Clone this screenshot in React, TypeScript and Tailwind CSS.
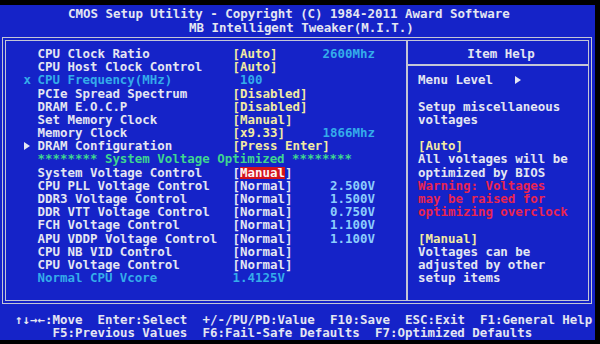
import type { ReactNode } from "react";

const WHITE = "text-[#e4e6f2]";
const YELLOW = "text-[#f2eaa2]";
const CYAN = "text-[#34acea]";
const SKY = "text-[#8ccdfc]";
const GREEN = "text-[#3fd690]";
const RED = "text-[#ea2450]";

function Tri() {
  return (
    <svg width="6" height="8" viewBox="0 0 6 8" className="inline-block">
      <path d="M0 0 L6 4 L0 8 Z" fill="currentColor" />
    </svg>
  );
}

type RowProps = {
  mark?: ReactNode;
  label: string;
  labelCls?: string;
  value?: ReactNode;
  extra?: string;
  extraCls?: string;
};

function Row({ mark, label, labelCls = WHITE, value, extra, extraCls = CYAN }: RowProps) {
  return (
    <div className="flex h-[13.2px] items-center whitespace-pre pl-[16.5px] leading-[13.2px]">
      <span className={`flex w-[15px] items-center pl-[1px] ${labelCls}`}>{mark}</span>
      <span className={`w-[195px] ${labelCls}`}>{label}</span>
      <span className="w-[90px]">{value}</span>
      <span className={extraCls}>{extra}</span>
    </div>
  );
}

function Val({ text, cls = YELLOW }: { text: string; cls?: string }) {
  return <span className={cls}>{text}</span>;
}

function HelpLine({ children, cls = WHITE }: { children?: ReactNode; cls?: string }) {
  return <div className={`flex h-[13.2px] items-center whitespace-pre leading-[13.2px] ${cls}`}>{children}</div>;
}

export default function App() {
  return (
    <div className="h-[344px] w-[600px] overflow-hidden bg-black pt-[5px] font-['DejaVu_Sans_Mono',monospace] text-[12.45px] font-bold">
      <div className="h-[335px] w-[595px] bg-[#1523c8] pt-[2.4px]">
        {/* title */}
        <div className={`h-[13.2px] whitespace-pre pl-[68px] leading-[13.2px] ${WHITE}`}>
          CMOS Setup Utility - Copyright (C) 1984-2011 Award Software
        </div>
        <div className={`h-[13.2px] whitespace-pre pl-[189px] leading-[13.2px] ${WHITE}`}>
          MB Intelligent Tweaker(M.I.T.)
        </div>

        {/* frame */}
        <div className="mt-[3.7px] ml-[2px] flex h-[267px] w-[590px] border-[4px] border-double border-[#c4c6d6]">
          <div className="w-[400px] pt-[5.5px]">
            <Row label="CPU Clock Ratio" value={<Val text="[Auto]" />} extra="2600Mhz" />
            <Row label="CPU Host Clock Control" value={<Val text="[Auto]" />} />
            <Row
              mark="x"
              label="CPU Frequency(MHz)"
              labelCls={CYAN}
              value={<Val text=" 100" cls={CYAN} />}
            />
            <Row label="PCIe Spread Spectrum" value={<Val text="[Disabled]" />} />
            <Row label="DRAM E.O.C.P" value={<Val text="[Disabled]" />} />
            <Row label="Set Memory Clock" value={<Val text="[Manual]" />} />
            <Row label="Memory Clock" value={<Val text="[x9.33]" />} extra="1866Mhz" />
            <Row mark={<Tri />} label="DRAM Configuration" value={<Val text="[Press Enter]" />} />
            <div className={`flex h-[13.2px] items-center whitespace-pre pl-[31.5px] leading-[13.2px] ${GREEN}`}>
              ******** System Voltage Optimized ********
            </div>
            <Row
              label="System Voltage Control"
              value={
                <span className={WHITE}>
                  [
                  <span className="inline-block h-[12px] bg-[#d3121e] leading-[12px] text-[#fff4f4]">Manual</span>]
                </span>
              }
            />
            <Row label="CPU PLL Voltage Control" value={<Val text="[Normal]" cls={WHITE} />} extra=" 2.500V" extraCls={SKY} />
            <Row label="DDR3 Voltage Control" value={<Val text="[Normal]" cls={WHITE} />} extra=" 1.500V" extraCls={SKY} />
            <Row label="DDR VTT Voltage Control" value={<Val text="[Normal]" cls={WHITE} />} extra=" 0.750V" extraCls={SKY} />
            <Row label="FCH Voltage Control" value={<Val text="[Normal]" cls={WHITE} />} extra=" 1.100V" extraCls={SKY} />
            <Row label="APU VDDP Voltage Control" value={<Val text="[Normal]" cls={WHITE} />} extra=" 1.100V" extraCls={SKY} />
            <Row label="CPU NB VID Control" value={<Val text="[Normal]" cls={WHITE} />} />
            <Row label="CPU Voltage Control" value={<Val text="[Normal]" cls={WHITE} />} />
            <Row label="Normal CPU Vcore" labelCls={CYAN} value={<Val text="1.4125V" cls={CYAN} />} />
          </div>

          {/* help */}
          <div className="w-[182px] border-l-2 border-[#c4c6d6]">
            <div className={`h-[24.5px] border-b-2 border-[#c4c6d6] pt-[5.5px] pl-[6px] text-center leading-[13.2px] ${WHITE}`}>
              Item Help
            </div>
            <div className="pt-[7.4px] pl-[10px]">
              <HelpLine>
                {"Menu Level   "}
                <Tri />
              </HelpLine>
              <HelpLine />
              <HelpLine>Setup miscellaneous</HelpLine>
              <HelpLine>voltages</HelpLine>
              <HelpLine />
              <HelpLine cls={YELLOW}>[Auto]</HelpLine>
              <HelpLine>All voltages will be</HelpLine>
              <HelpLine>optimized by BIOS</HelpLine>
              <HelpLine cls={RED}>Warning: Voltages</HelpLine>
              <HelpLine cls={RED}>may be raised for</HelpLine>
              <HelpLine cls={RED}>optimizing overclock</HelpLine>
              <HelpLine />
              <HelpLine cls={YELLOW}>[Manual]</HelpLine>
              <HelpLine>Voltages can be</HelpLine>
              <HelpLine>adjusted by other</HelpLine>
              <HelpLine>setup items</HelpLine>
            </div>
          </div>
        </div>

        {/* footer */}
        <div className={`mt-[8.5px] flex h-[13.2px] items-center whitespace-pre pl-[15px] leading-[13.2px] ${WHITE}`}>
          <span className="w-[82.5px]">↑↓→←:Move</span>
          <span className="w-[105px]">Enter:Select</span>
          <span className="w-[127.5px]">+/-/PU/PD:Value</span>
          <span className="w-[75px]">F10:Save</span>
          <span className="w-[75px]">ESC:Exit</span>
          <span>F1:General Help</span>
        </div>
        <div className={`flex h-[13.2px] items-center whitespace-pre pl-[52.5px] leading-[13.2px] ${WHITE}`}>
          <span className="w-[150px]">F5:Previous Values</span>
          <span className="w-[172.5px]">F6:Fail-Safe Defaults</span>
          <span>F7:Optimized Defaults</span>
        </div>
      </div>
    </div>
  );
}
